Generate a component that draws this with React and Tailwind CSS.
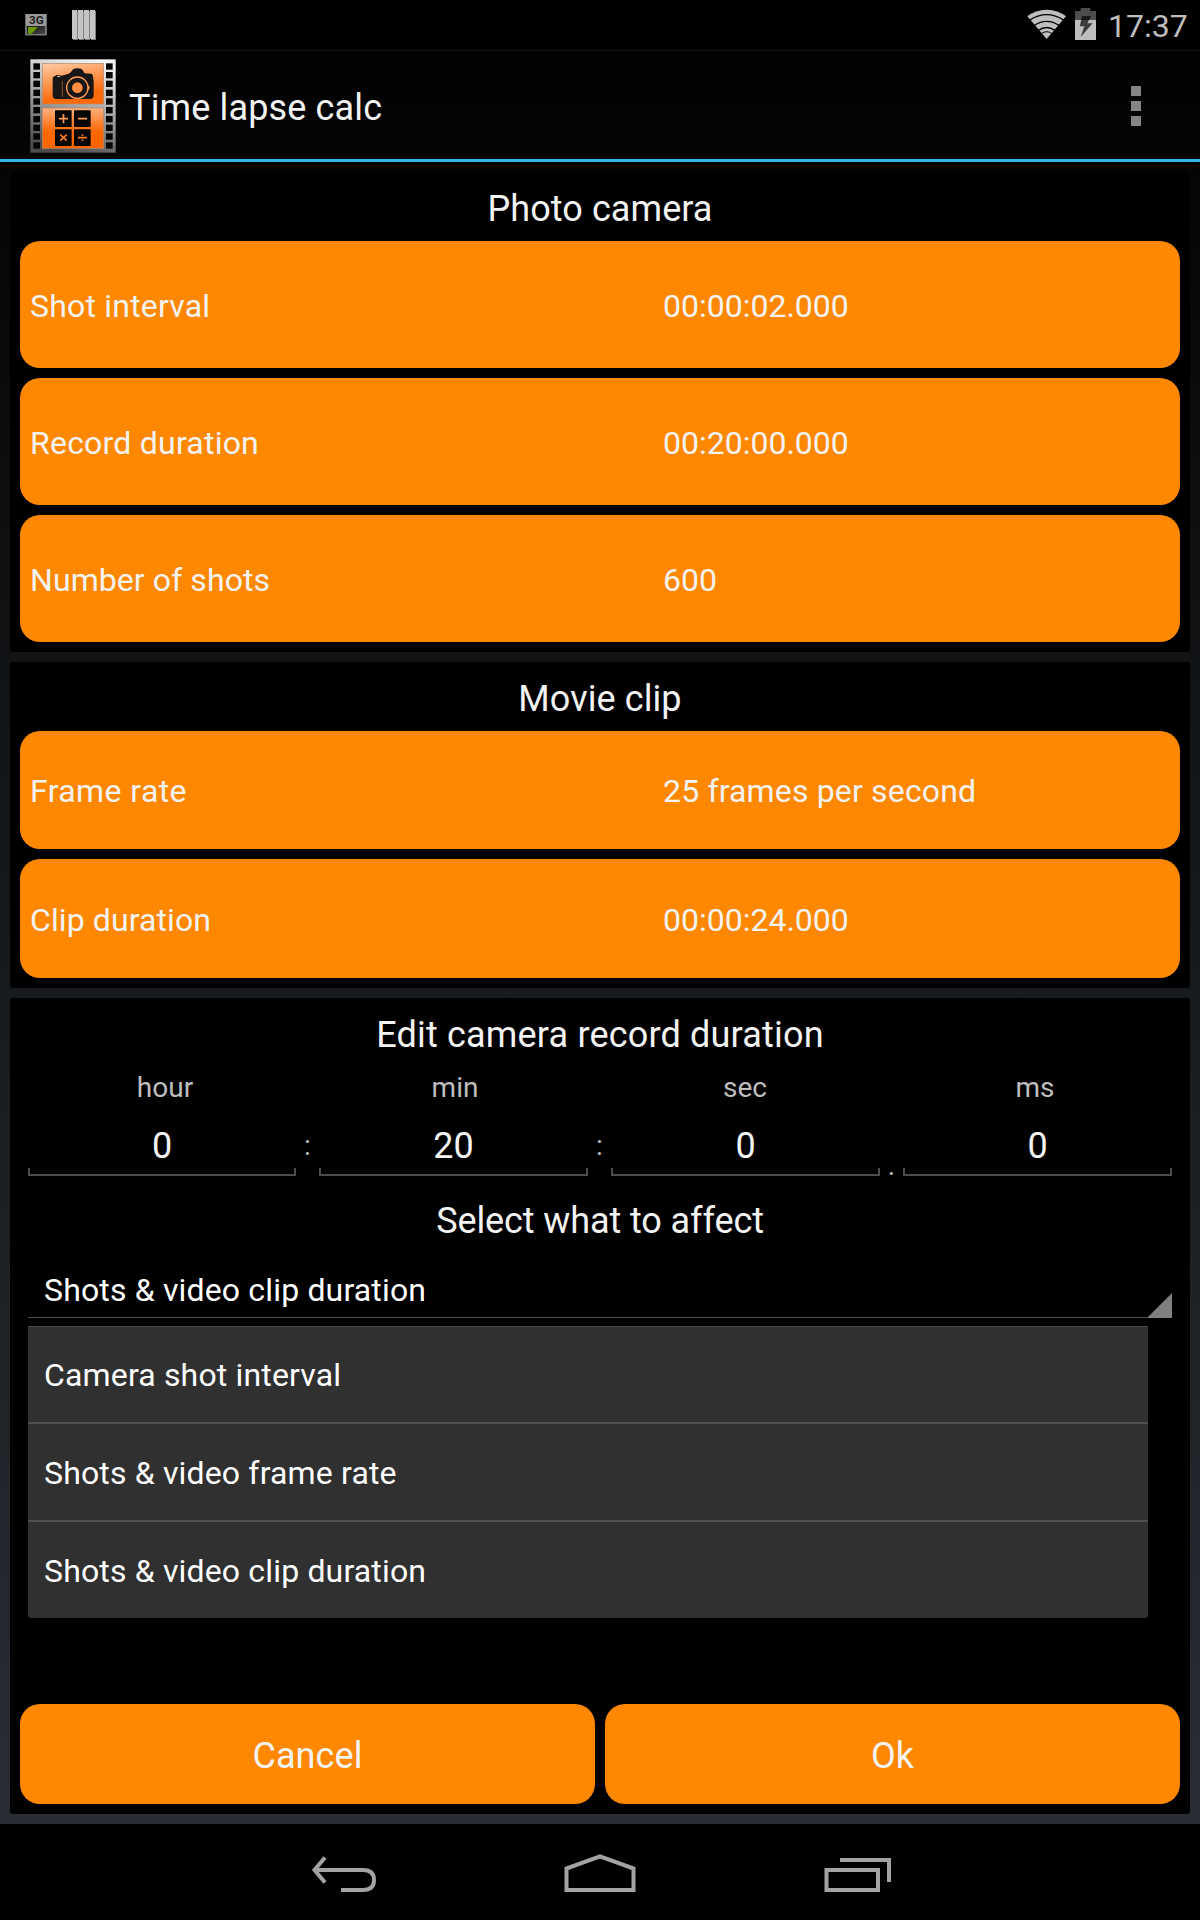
import React from "react";

function SignalIcon() {
  return (
    <svg className="block h-[22px] w-[22px]" viewBox="75 42 66 66">
      <defs>
        <linearGradient id="sigBar" x1="0" x2="1" y1="0" y2="1">
          <stop offset="0" stopColor="#111" />
          <stop offset="1" stopColor="#4a4a4a" />
        </linearGradient>
      </defs>
      <rect x="76" y="42" width="64" height="64" fill="#9a9a9a" />
      <text x="109" y="73" textAnchor="middle" fontSize="35" fontWeight="700" fontFamily="Roboto, sans-serif" fill="#1c1c1c">3G</text>
      <rect x="80" y="78" width="56" height="25" fill="url(#sigBar)" />
      <path d="M84 81H113L95 101H84Z" fill="#6b9a00" />
    </svg>
  );
}

function BarsIcon() {
  return (
    <svg className="block h-[30px] w-[24px]" viewBox="216 30 72 90">
      {[216, 234, 252, 270].map((x) => (
        <g key={x}>
          <path d={`M${x} 30H${x + 15}V33H${x + 18}V120H${x + 3}V117H${x}Z`} fill="#c4c4c4" />
          <path d={`M${x + 15} 33V117H${x + 3}V120H${x + 18}V33Z`} fill="#808080" />
        </g>
      ))}
    </svg>
  );
}

function WifiIcon() {
  return (
    <svg className="block h-[30px] w-[39px]" viewBox="141 27 117 90">
      <path d="M200 117L142 49Q167 29 200 29Q233 29 258 49Z" fill="#bebebe" />
      <g fill="none" stroke="#000" strokeWidth="4">
        <path d="M148 61Q200 27 252 61" />
        <path d="M162 77Q200 51 238 77" />
        <path d="M175 91Q200 74 225 91" />
        <path d="M184 101Q200 89 216 101" strokeWidth="3" />
      </g>
    </svg>
  );
}

function BatteryIcon() {
  return (
    <svg className="block h-[32px] w-[21px]" viewBox="285 24 63 96">
      <path d="M285 60V33H302V24H331V33H348V60Z" fill="#4d4d4d" />
      <rect x="285" y="60" width="63" height="60" fill="#bebebe" />
      <path d="M307 48H333L322 70H338L302 111L313 79H299Z" fill="#3c3c3c" />
      <path d="M307 48H333L327 60H303Z" fill="#181818" />
    </svg>
  );
}

function AppIcon() {
  const holes = [190, 216, 242, 269, 295, 321, 348, 374, 400, 427];
  return (
    <svg className="block h-[94px] w-[86px]" viewBox="90 177 258 282">
      <defs>
        <linearGradient id="film" x1="0.7" x2="0.4" y1="0" y2="1">
          <stop offset="0" stopColor="#f4f4f4" />
          <stop offset="0.5" stopColor="#a4a4a4" />
          <stop offset="1" stopColor="#4c4c4c" />
        </linearGradient>
        <linearGradient id="topFrame" x1="0.15" x2="0.45" y1="0" y2="1">
          <stop offset="0" stopColor="#ffc8a2" />
          <stop offset="0.85" stopColor="#ff6a08" />
        </linearGradient>
        <linearGradient id="bottomFrame" x1="0" x2="0" y1="0" y2="1">
          <stop offset="0" stopColor="#ffb080" />
          <stop offset="0.6" stopColor="#ff6600" />
        </linearGradient>
      </defs>
      <rect x="91" y="178" width="256" height="280" fill="url(#film)" />
      {holes.map((y) => (
        <g key={y} fill="#050505">
          <rect x="100" y={y} width="20" height="19" />
          <rect x="318" y={y} width="20" height="19" />
        </g>
      ))}
      <rect x="127" y="190" width="184" height="122" fill="url(#topFrame)" stroke="#b08a70" strokeWidth="2" />
      <rect x="127" y="324" width="184" height="121" fill="url(#bottomFrame)" stroke="#b08a70" strokeWidth="2" />
      <path d="M158 236Q158 228 167 228V225H182V228L204 222Q211 219 216 212Q220 205 232 205Q245 205 249 212L254 220L273 221Q279 222 279 232L281 242V286Q281 297 270 297H167Q158 297 158 286Z" fill="#191715" />
      <path d="M187 243V291" stroke="#94501f" strokeWidth="3" />
      <path d="M171 229H181" stroke="#ffd0b0" strokeWidth="3" />
      <circle cx="232" cy="263" r="32" fill="none" stroke="#ff9a55" strokeWidth="4" />
      <circle cx="232" cy="263" r="20" fill="#ff8e42" stroke="#191715" strokeWidth="8" />
      <path d="M263 254L270 263L263 272Z" fill="#ff9a55" />
      <g fill="#050505">
        <rect x="165" y="331" width="50" height="50" rx="2" />
        <rect x="222" y="331" width="50" height="50" rx="2" />
        <rect x="165" y="388" width="50" height="50" rx="2" />
        <rect x="222" y="388" width="50" height="50" rx="2" />
      </g>
      <g fill="none" strokeWidth="5">
        <path d="M177 356H204M190.500 342V370M234 356H261" stroke="#ff9a55" />
        <path d="M181 404L200 422M200 404L181 422M234 413H261" stroke="#ff7a20" />
      </g>
      <rect x="245" y="403" width="5" height="5" fill="#ff7a20" />
      <rect x="245" y="418" width="5" height="5" fill="#ff7a20" />
    </svg>
  );
}

function StatusBar() {
  return (
    <div className="flex h-[51px] items-start border-b border-[#111] bg-black pl-[25px] pr-[12px]">
      <div className="pt-[14px]"><SignalIcon /></div>
      <div className="ml-[25px] pt-[10px]"><BarsIcon /></div>
      <div className="ml-auto pt-[9px]"><WifiIcon /></div>
      <div className="ml-[9px] pt-[8px]"><BatteryIcon /></div>
      <div className="ml-[12px] w-[80px] whitespace-nowrap pt-[6px] text-[32px] leading-[40px] text-[#bebebe]">17:37</div>
    </div>
  );
}

function ActionBar() {
  return (
    <div className="flex h-[111px] items-start border-b-[3px] border-[#33b5e5] pl-[30px] pr-[59px]">
      <div className="pt-[8px]"><AppIcon /></div>
      <div className="ml-[13px] pt-[37px] text-[36px] leading-[40px] tracking-[0.15px] text-[#f3f3f3]">Time lapse calc</div>
      <div className="ml-auto flex flex-col gap-[5px] pt-[35px]">
        <div className="size-[10px] bg-[#858585]" />
        <div className="size-[10px] bg-[#858585]" />
        <div className="size-[10px] bg-[#858585]" />
      </div>
    </div>
  );
}

function Heading({ children, className = "" }) {
  return <h2 className={`h-[69px] pt-[5px] text-center text-[36px] font-normal leading-[65px] ${className}`}>{children}</h2>;
}

function Row({ label, value, className, labelClass = "", valueClass = "" }) {
  return (
    <div className={`flex items-center rounded-[20px] bg-[#ff8800] pl-[10px] text-[32px] leading-[40px] ${className}`}>
      <div className={`w-[633px] ${labelClass}`}>{label}</div>
      <div className={valueClass}>{value}</div>
    </div>
  );
}

function Field({ value, className }) {
  return (
    <div className={`flex h-[69px] flex-col ${className}`}>
      <div className="h-[61px] pt-[17px] text-center text-[36px] leading-[45px]">{value}</div>
      <div className="h-[8px] border-x-2 border-b-2 border-[#4d4d4d]" />
    </div>
  );
}

function Separator({ low, children }) {
  return (
    <div className={`h-[69px] w-[23px] text-center text-[28px] leading-[40px] text-[#bebebe] ${low ? "pt-[39px]" : "pt-[19px]"}`}>
      {children}
    </div>
  );
}

function EditPanel() {
  const options = ["Camera shot interval", "Shots & video frame rate", "Shots & video clip duration"];
  return (
    <section className="flex h-[816px] flex-col rounded-[3px] bg-black px-[10px] pb-[10px]">
      <Heading className="tracking-[0.18px]">Edit camera record duration</Heading>
      <div className="grid h-[40px] grid-cols-4 pt-px text-center text-[28px] leading-[40px] text-[#bebebe]">
        <div>hour</div>
        <div>min</div>
        <div>sec</div>
        <div>ms</div>
      </div>
      <div className="flex px-[8px]">
        <Field className="w-[268px]" value="0" />
        <Separator>:</Separator>
        <Field className="w-[269px]" value="20" />
        <Separator>:</Separator>
        <Field className="w-[269px]" value="0" />
        <Separator low>.</Separator>
        <Field className="w-[269px]" value="0" />
      </div>
      <Heading className="mt-[8px] tracking-[-0.1px]">Select what to affect</Heading>
      <div className="mx-[8px] flex h-[65px] justify-between border-b border-[#4d4d4d] pl-[16px] text-[32px] text-white">
        <div className="pt-[17px] leading-[40px] tracking-[0.16px]">Shots &amp; video clip duration</div>
        <svg className="-mb-px mt-auto h-[25px] w-[25px]" viewBox="0 0 25 25">
          <path d="M25 0V25H1V24Z" fill="#808080" />
        </svg>
      </div>
      <ul className="ml-[8px] mt-[8px] flex h-[292px] w-[1120px] flex-col rounded-b-[3px] border-t border-[#4a4a4a] bg-[#303030] text-[32px] tracking-[0.16px] text-white">
        {options.map((o, i) => (
          <li key={o} className={`h-[98px] pl-[16px] pt-px leading-[97px] ${i < 2 ? "border-b-2 border-[#505050]" : ""} ${i === 0 ? "-mt-px" : ""}`}>{o}</li>
        ))}
      </ul>
      <div className="mt-auto grid grid-cols-2 gap-[10px]">
        <button className="h-[100px] rounded-[20px] bg-[#ff8800] pt-[3px] text-[36px] leading-[40px] tracking-[0.1px]">Cancel</button>
        <button className="h-[100px] rounded-[20px] bg-[#ff8800] pt-[3px] text-[36px] leading-[40px]">Ok</button>
      </div>
    </section>
  );
}

function NavBar() {
  return (
    <div className="flex h-[96px] justify-center bg-black">
      <svg className="h-[96px] w-[256px]" viewBox="216 1824 256 96" fill="none" stroke="#a3a3a3" strokeWidth="4">
        <path d="M314 1870H363Q374 1870 374 1880Q374 1890 363 1890H341" />
        <path d="M325 1857.500L314.500 1870L325 1882.500" />
      </svg>
      <svg className="h-[96px] w-[256px]" viewBox="472 1824 256 96" fill="none" stroke="#a3a3a3" strokeWidth="4">
        <path d="M566.500 1890V1868.500L600 1856.300L633.500 1868.500V1890Z" />
      </svg>
      <svg className="h-[96px] w-[256px]" viewBox="728 1824 256 96" fill="none" stroke="#a3a3a3" strokeWidth="4">
        <path d="M826.500 1870H878V1890H826.500Z" />
        <path d="M840 1860H889V1882" />
      </svg>
    </div>
  );
}

export default function App() {
  return (
    <div className="flex h-[1920px] w-[1200px] flex-col overflow-hidden bg-[linear-gradient(to_bottom,#000000,#101214_33%,#2b3037)] font-['Roboto',sans-serif] text-[#f3f3f3]">
      <StatusBar />
      <ActionBar />
      <main className="flex h-[1662px] flex-col gap-[10px] p-[10px]">
        <section className="rounded-[3px] bg-black px-[10px] pb-[10px]">
          <Heading className="tracking-[0.08px]">Photo camera</Heading>
          <div className="flex flex-col gap-[10px]">
            <Row className="h-[127px] pt-[2px]" labelClass="tracking-[0.2px]" label="Shot interval" value="00:00:02.000" />
            <Row className="h-[127px] pt-[2px]" labelClass="tracking-[0.22px]" label="Record duration" value="00:20:00.000" />
            <Row className="h-[127px] pt-[2px]" labelClass="tracking-[0.08px]" label="Number of shots" value="600" />
          </div>
        </section>
        <section className="rounded-[3px] bg-black px-[10px] pb-[10px]">
          <Heading className="tracking-[0.08px]">Movie clip</Heading>
          <div className="flex flex-col gap-[10px]">
            <Row className="h-[118px] pt-px" labelClass="tracking-[0.4px]" valueClass="tracking-[0.16px]" label="Frame rate" value="25 frames per second" />
            <Row className="h-[119px] pt-[2px]" labelClass="tracking-[0.1px]" label="Clip duration" value="00:00:24.000" />
          </div>
        </section>
        <EditPanel />
      </main>
      <NavBar />
    </div>
  );
}
